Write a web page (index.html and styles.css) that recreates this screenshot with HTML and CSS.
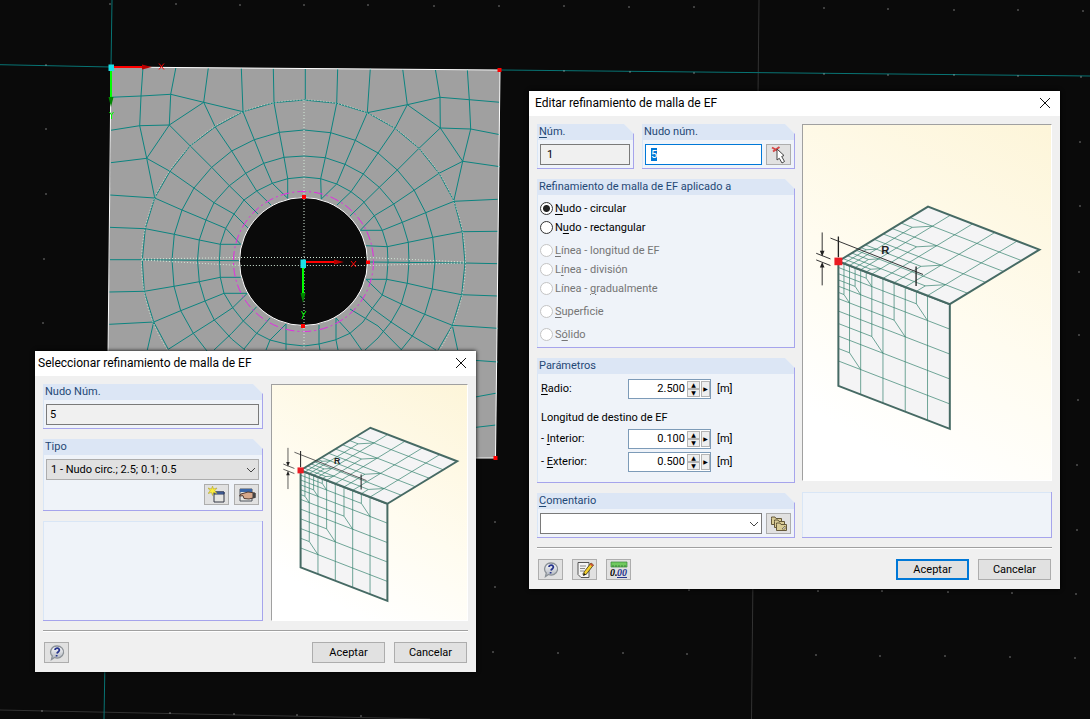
FILE: index.html
```
<!DOCTYPE html>
<html lang="es">
<head>
<meta charset="utf-8">
<meta name="viewport" content="width=device-width, initial-scale=1">
<title>Refinamiento de malla de EF</title>
<link rel="stylesheet" href="styles.css">
</head>
<body>
<main class="workspace">
<svg class="model" viewBox="0 0 1090 719" preserveAspectRatio="xMinYMin slice" aria-hidden="true">
  <g class="guides">
    <path class="guide-dark" d="M759 0L751.500 719M0 710L430 719"/>
    <path class="guide-teal" d="M0 64.700L111 67M500 70L1090 76M112 0L111 67M105 660L104 719"/>
  </g>
  <path class="dots" d="M110 4h0M176 4h0M240 5h0M304 5h0M368 5h0M434 6h0M499 6h0M564 6h0M629 7h0M694 7h0M824 8h0M888 9h0M954 10h0M1018 10h0M1083 11h0M46 65h0M46 129h0M46 194h0M44 259h0M43 323h0M564 71h0M630 72h0M694 73h0M824 74h0M888 75h0M954 75h0M1018 76h0M1081 77h0M1080 142h0M1080 206h0M1079 272h0M1079 335h0M1078 400h0M1077 465h0M1077 530h0M1076 594h0M1075 658h0M495 522h0M495 587h0M493 652h0M558 653h0M623 653h0M687 654h0M816 655h0M880 656h0M945 656h0M1010 657h0M689 590h0M818 591h0M882 591h0M948 592h0M1012 593h0M42 711h0M170 713h0M234 714h0M297 715h0M361 716h0"/>
  <path class="plate" d="M111.500 67L500 70L495.500 458L107 455Z"/>
  <g class="mesh">
    <path d="M143 67L141 96L139.700 125.700L146.700 158.300L154.700 197.700M176 67L170.700 94.300L169.300 125L190.300 146L211.700 167.300L229.300 185.700L244 200L258 214M208.300 68L203.700 102.300L215.300 127L231.700 151L245.700 173.300L256.700 191L271 205M241.300 68L243 111.700L254.300 139.700L263.700 163.300L272.300 183.300L287.700 198.300M273.300 68L274 102.700L279.300 132.300L284 157.300L287.700 178.700V198.300M305.300 68V100"/>
    <path d="M110 97.300L141 96L170.700 94.300L203.700 102.300L243 111.700M110.700 130.300L139.700 125.700L169.300 125L203.700 102.300M110.700 162.700L146.700 158.300L169.300 125M110 195L154.700 198L182 210L206 220L225.700 228.300L240.700 244.300M146.700 158.300L170 171.300L194 188L214 202.700L234 214L248.300 228.300"/>
    <path d="M337.700 68.300L336.700 103.300L330.700 132.700L325.300 157.700L320.700 178.700L321.300 199M370.300 68.700L367.300 112.700L355.300 140.300L345 164.300L336.700 184L321.300 199M402.700 69L407.300 104.700L395 128.300L378 153L363.300 174L351 191.700L337 205M435.300 69L440 97.300L440.300 128L419 148.300L397.300 170L379.300 187.300L350 216M467.300 69.300L469.300 99.700L470.700 129L462.700 161.300L454 200M367.300 112.700L407.300 104.700L440 97.300L469.300 99.700L500 102.300M407.300 104.700L440.300 128L470.700 129L500 134.700M440.300 128L462.700 161.300L500 166.700M462.700 161.300L439 173.300L414 190.300L393.700 204L374.300 215.700L360.300 230.300"/>
    <path d="M497.700 199.300L454 201.300L425.700 212.700L402.300 222.300L382.300 230.300H360.300M497.700 231.300L462.300 231.700L432.700 237.300L408.300 242.300L387.300 246.700L366 245.700M497.700 263.700L465 263L367.700 262M497.700 296L461.700 294.700L432.300 289L407.300 283.300L386.700 279.300H366M497.700 328.300L452.300 325.300L424.700 314.300L401.300 304L382.300 295L366 279.300M436 350L412.300 336L391 322L372.300 308.300L360 295.700M401.700 350L378 326L350 309M361.700 350L350 333.300L336 318V340L338 350M319 325V344L320 350M452.300 325.300L457.700 350"/>
    <path d="M109.300 227.300L145.300 228.700L174.300 234.300L199.300 240L220.300 244.300H240.700M110 259.700H142L239 260.700M109.300 292L144.300 291.300L174 286.300L199.300 281.700L220.300 277.300H240.700M109.300 324.300L153.700 322L180.700 310.700L205 301L224 293.300H247.300M153.700 322L147.300 350M168.300 349.300L193.300 333.300L214.300 320L232.700 307.700L247.300 293.300M214 350L231.700 333.300L243.300 321L256.700 306.700M244 349L256.700 333.300L270 318M266 350L270 340L286 324V350M470 360L498 362M470 398L497 393M470 428L496 425"/>
    <path d="M304 100L274 102.700L243 111.700L215 127L190 146L170 171.300L154.700 198L145.300 228.700L142.300 260L144.300 291.300L153.700 322L168.300 349.300M304 100L336.700 103.300L367.300 112.700L395 128.300L419 148.300L439 173.300L454 201L462.300 231.700L465 263L461.700 294.700L452.300 325.300L438 350"/>
    <path d="M304 130L279.300 132.300L254.300 139.700L231.700 151L211.700 167.300L194 188L182 210L174.300 234.300L172 260L174 286.300L180.700 310.700L193.300 333.300L207 351M304 130L330.700 132.700L355.300 140.300L378 153L397.300 170L414 190L425.700 212.700L432.700 237.300L435 262L432.300 289L424.700 314.300L412.300 336L401 350"/>
    <path d="M304 156L284 157.300L263.700 163.300L245.700 173.300L229.300 185.700L214 202.700L206 220L199.300 240L197.500 260L199.300 281.700L205 301L214.300 320L231.700 339L245 350M304 156L325.300 157.700L345 164.300L363.300 174L379.300 187.300L393.700 204L402.300 222.300L408.300 242.300L409 262L407.300 283.300L401.300 304L391 322L378 338L365 350"/>
    <path d="M304 177L287.700 178.700L272.300 183.300L256.700 191L244 200L234 214L225.700 228.300L220.300 244.300L219.500 260L220.300 277.300L224 293.300L232.700 307.700L243.300 321L256.700 333.300L270 340L286 344L304 346L319 344L335 340L350 333.300L363 322L372.300 308.300L382.300 295L386.700 279.300L388 262L387.300 246.700L382.300 230.300L374.300 215.700L363 201L351 191.700L336.700 184L320.700 178.700Z"/>
  </g>
  <circle class="hole" cx="303.500" cy="261.500" r="64"/>
  <circle class="zone" cx="303.500" cy="261.500" r="70"/>
  <circle class="dotted" cx="303.500" cy="262" r="162"/>
  <path class="dotted" d="M304 100V350M142 259L240 257.500H368L465 262M142 260L240 265.500H368L465 263"/>
  <path class="edge" d="M107 455L111 67L500 70L495.500 458H476"/>
  <g class="axis-x"><path d="M112 67H142M304 262H334"/><path class="tip" d="M142 64.500L152 67L142 69.500ZM334 259.500L344 262L334 264.500Z"/><path class="letter" d="M159 63.500L164 69.500M164 63.500L159 69.500M351 261L356 267M356 261L351 267"/></g>
  <g class="axis-y"><path d="M111 68V97M303 263V293"/><path class="tip" d="M108.500 97H113.500L111 107ZM300.500 293H305.500L303 303Z"/><path class="letter" d="M109.500 112L111.500 115L113.500 112M111.500 115V119M301.500 311L303.500 315L306 311M303.500 315L302 319"/></g>
  <path class="origin" d="M108.500 64.500H114V71H108.500ZM300.500 259.500H306V268H300.500Z"/>
  <path class="nodes" d="M497.500 68H501.500V72H497.500ZM493.500 456H497.500V460H493.500ZM302 195H306V199H302ZM301 324H305V328H301ZM366 260.500H370V264H366Z"/>
</svg>

<svg class="defs" aria-hidden="true">
  <defs>
    <linearGradient id="steel" x1="0" y1="0" x2="0" y2="1"><stop offset="0" stop-color="#fff"/><stop offset="1" stop-color="#aab0ba"/></linearGradient>
    <symbol id="i-help" viewBox="0 0 18 18">
      <path d="M9 2A6.500 6 0 1 1 6.500 13.500L3.500 15.500L4.300 12A6.500 6 0 0 1 9 2Z" fill="url(#steel)" stroke="#8c9298" stroke-width="1.300"/>
      <path d="M7 6C7.300 3.500 11.800 3.500 11.300 6.400C11 8 9.300 8 9 9.500M8.700 11L8.500 12.500" fill="none" stroke="#26348c" stroke-width="1.800"/>
    </symbol>
    <g id="mesh-face">
      <path class="face" d="M0 0H100V100H0Z"/>
      <path class="fine" d="M0 20H100M0 40H100M0 60H100M0 80H100M20 0V100M40 0V100M60 0V100M80 0V100M10 0V70L20 80M30 0V50L40 60M50 0V30L60 40M70 0V10L80 20M0 70H10M0 50H30M0 30H50M0 10H70M5 0V25L10 30M15 0V15L20 20M25 0V5L30 10M0 25H5M0 15H15M0 5H25"/>
      <path class="rim" d="M0 0H100V100H0Z"/>
    </g>
    <g id="folded-mesh">
      <use href="#mesh-face" transform="matrix(3.37 1.3 0 3.77 114 217)"/>
      <use href="#mesh-face" transform="matrix(3.37 1.3 2.71 -1.65 114 217)"/>
      <path d="M90 147L370 257M47 193L90 210M47 213L90 230M65 130V190M65 290V230" fill="none" stroke="#333" stroke-width="3"/>
      <path d="M114 142V205M349 233V292" stroke="#222" stroke-width="4"/>
      <path d="M58 185H72L65 203ZM58 236H72L65 219Z" fill="#222"/>
      <text x="244" y="194" class="radius">R</text>
      <path d="M102 206H126V229H102Z" fill="#ec1c24"/>
    </g>
  </defs>
</svg>

<section class="window select-window" aria-labelledby="t1">
  <header class="titlebar"><h2 id="t1">Seleccionar refinamiento de malla de EF</h2>
    <button class="close" type="button" aria-label="Cerrar"><svg viewBox="0 0 12 12"><path d="M1 1L11 11M11 1L1 11"/></svg></button></header>
  <form class="content">
    <div class="columns">
      <div class="stack">
        <div class="group"><label class="caption" for="nodo">Nudo Núm.</label>
          <div class="fields"><input id="nodo" class="box" value="5" readonly></div></div>
        <div class="group"><label class="caption" for="tipo">Tipo</label>
          <div class="fields"><span class="combo"><select id="tipo" class="grey"><option>1 - Nudo circ.; 2.5; 0.1; 0.5</option></select><svg viewBox="0 0 10 6"><path d="M1 1L5 5L9 1"/></svg></span></div>
          <div class="tools">
            <button class="icon" type="button" aria-label="Nuevo"><svg viewBox="0 0 18 18"><path d="M6 6H16V16H6Z" fill="#e5e5e2" stroke="#343946"/><path d="M6 6H16V8H6Z" fill="#557fc5" stroke="#26355c"/><path d="M4.500 0L5.500 3L9 2L6.800 4.700L9 7.500L5.600 6.500L4.500 9.500L3.500 6.500L0 7.500L2.200 4.700L0 2L3.500 3Z" fill="#fbec3a" stroke="#b2a434" stroke-width=".6"/></svg></button>
            <button class="icon" type="button" aria-label="Editar"><svg viewBox="0 0 18 18"><path d="M2 3H14V15H2Z" fill="#e5e5e2" stroke="#4d535d"/><path d="M2 3H14V6H2Z" fill="#3a66a8"/><path d="M17 7L10 6L3 8L1.500 10L5 9.700L6 12.500L11 13L17 11.500Z" fill="#d8a98c" stroke="#503a32"/><path d="M14.500 7L17.500 7V12L14.500 12Z" fill="#454545"/></svg></button>
          </div></div>
        <div class="group blank"></div>
      </div>
      <div class="preview"><svg viewBox="3 -114 757 911" role="img" aria-label="Malla con radio R"><use href="#folded-mesh"/></svg></div>
    </div>
    <footer class="actions"><button class="icon" type="button" aria-label="Ayuda"><svg viewBox="0 0 18 18"><use href="#i-help"/></svg></button><span class="spacer"></span><button class="push" type="button">Aceptar</button><button class="push" type="button">Cancelar</button></footer>
  </form>
</section>

<section class="window edit-window" aria-labelledby="t2">
  <header class="titlebar"><h2 id="t2">Editar refinamiento de malla de EF</h2>
    <button class="close" type="button" aria-label="Cerrar"><svg viewBox="0 0 12 12"><path d="M1 1L11 11M11 1L1 11"/></svg></button></header>
  <form class="content">
    <div class="columns">
      <div class="stack">
        <div class="pair">
          <div class="group"><label class="caption" for="num"><u>N</u>úm.</label><div class="fields"><input id="num" class="box inset" value="1" readonly></div></div>
          <div class="group"><label class="caption" for="nudo">Nudo núm.</label><div class="fields"><input id="nudo" class="box active" value="5">
            <button class="icon" type="button" aria-label="Seleccionar nudo"><svg viewBox="0 0 18 18"><path d="M2 1.500L9 5.500M9.500 1L3 5.500" stroke="#d64848" stroke-width="2"/><path d="M7 3L14 9.500L11.700 10.500L14.500 15.500L12 17L9.300 12.300L7 14Z" fill="#fff" stroke="#444"/></svg></button></div></div>
        </div>
        <fieldset class="group"><legend class="caption">Refinamiento de malla de EF aplicado a</legend>
          <div class="choices">
            <div><label><input type="radio" name="a" checked><span><u>N</u>udo - circular</span></label><label><input type="radio" name="a"><span>N<u>u</u>do - rectangular</span></label></div>
            <div><label><input type="radio" name="a" disabled><span><u>L</u>ínea - longitud de EF</span></label><label><input type="radio" name="a" disabled><span>L<u>í</u>nea - división</span></label><label><input type="radio" name="a" disabled><span>Línea - <u>g</u>radualmente</span></label></div>
            <div><label><input type="radio" name="a" disabled><span><u>S</u>uperficie</span></label></div>
            <div><label><input type="radio" name="a" disabled><span>S<u>ó</u>lido</span></label></div>
          </div></fieldset>
        <fieldset class="group params"><legend class="caption">Parámetros</legend>
          <div class="table">
            <label for="r"><u>R</u>adio:</label><span class="spin"><input id="r" value="2.500"><span class="steps"><button type="button" aria-label="Más">▲</button><button type="button" aria-label="Menos">▼</button></span><button class="more" type="button" aria-label="Lista">▶</button></span><span>[m]</span>
            <span class="subhead">Longitud de destino de EF</span>
            <label for="i">- <u>I</u>nterior:</label><span class="spin"><input id="i" value="0.100"><span class="steps"><button type="button" aria-label="Más">▲</button><button type="button" aria-label="Menos">▼</button></span><button class="more" type="button" aria-label="Lista">▶</button></span><span>[m]</span>
            <label for="e">- <u>E</u>xterior:</label><span class="spin"><input id="e" value="0.500"><span class="steps"><button type="button" aria-label="Más">▲</button><button type="button" aria-label="Menos">▼</button></span><button class="more" type="button" aria-label="Lista">▶</button></span><span>[m]</span>
          </div></fieldset>
        <div class="group"><label class="caption" for="com"><u>C</u>omentario</label><div class="fields"><span class="combo"><select id="com"><option></option></select><svg viewBox="0 0 10 6"><path d="M1 1L5 5L9 1"/></svg></span>
          <button class="icon" type="button" aria-label="Comentarios"><svg viewBox="0 0 18 18"><g fill="#d9cc96" stroke="#65593a"><path d="M1.500 3.500V2H5L6 3.500H11.500V9.500H1.500Z"/><path d="M4.500 6.500V5H8L9 6.500H14.500V12.500H4.500Z"/><path d="M6.500 9.500V8H10L11 9.500H16.500V15.500H6.500Z"/></g><path d="M12 14L15 11V14Z" fill="#fff" stroke="#65593a" stroke-width=".7"/></svg></button></div></div>
      </div>
      <div class="stack side">
        <div class="preview"><svg viewBox="7 -195 750 1074" role="img" aria-label="Malla con radio R"><use href="#folded-mesh"/></svg></div>
        <div class="group note"></div>
      </div>
    </div>
    <footer class="actions">
      <button class="icon" type="button" aria-label="Ayuda"><svg viewBox="0 0 18 18"><use href="#i-help"/></svg></button>
      <button class="icon" type="button" aria-label="Nota"><svg viewBox="0 0 18 18"><path d="M2 1.500H13V16.500H5L2 13.500Z" fill="#f4f4f4" stroke="#555"/><path d="M4 5H10M4 7.500H9M4 10H8M6 13H11" stroke="#888"/><path d="M15 2L17.500 4L10.500 13L7.500 14.500L8 11Z" fill="#f3cf2c" stroke="#3b3517" stroke-width=".8"/><path d="M15 2L17.500 4L16.300 5.500L13.800 3.500Z" fill="#c9543d"/><path d="M7.500 14.500L8 12L9.500 13.500Z" fill="#111"/></svg></button>
      <button class="icon" type="button" aria-label="Unidades y decimales"><svg viewBox="0 0 18 18"><path d="M1 1H17V6H1Z" fill="#6fc95e" stroke="#38883b" stroke-width=".7"/><path d="M3 4V6M6 4V6M9 4V6M12 4V6M15 4V6" stroke="#27662b" stroke-width=".7"/><text x="0" y="15" class="units">0.</text><text x="7" y="15" class="units blue">00</text><path d="M7 16.500H17" stroke="#26348c"/></svg></button>
      <span class="spacer"></span><button class="push default" type="button">Aceptar</button><button class="push" type="button">Cancelar</button>
    </footer>
  </form>
</section>
</main>
<script src="focus.js"></script>
</body>
</html>
```
FILE: focus.js
```
const nodeField = document.getElementById("nudo");
nodeField.focus();
nodeField.select();
```
FILE: styles.css
```
* { box-sizing: border-box; }
body { margin: 0; background: #0a0a0a; font: 11px/14px Roboto, sans-serif; color: #000; }
input, select, button { font: inherit; color: inherit; margin: 0; }
u { text-underline-offset: 2px; }

.workspace { position: relative; min-height: 100vh; overflow: hidden; }
.model { display: block; width: 100%; height: 100vh; }
.defs { position: absolute; width: 0; height: 0; }

.guide-dark { stroke: #333; fill: none; }
.guide-teal { stroke: #087474; fill: none; }
.dots { stroke: #ddd; stroke-width: 1; stroke-linecap: square; }
.plate { fill: #a0a0a0; }
.mesh { fill: none; stroke: #0c8480; stroke-width: 1; }
.hole { fill: #0a0a0a; stroke: #fff; stroke-width: 1; }
.zone { fill: none; stroke: #e32be3; stroke-dasharray: 9 3 2 3; }
.dotted { fill: none; stroke: #d3ead8; stroke-dasharray: 1 2; }
.edge { fill: none; stroke: #fff; stroke-width: 1; }
.axis-x { fill: none; stroke: #f00; stroke-width: 2; }
.axis-x .tip { fill: #b00; stroke: none; }
.axis-y { fill: none; stroke: #0f0; stroke-width: 2; }
.axis-y .tip { fill: #080; stroke: none; }
.axis-x .letter, .axis-y .letter { stroke-width: 1; }
.origin { fill: #1ce0e8; }
.nodes { fill: #f00; }

.window { position: absolute; background: #f0f0f0; box-shadow: 0 0 4px #000; }
.select-window { left: 35px; top: 351px; width: 441px; }
.edit-window { left: 529px; top: 91px; width: 531px; }
.titlebar { display: flex; align-items: center; justify-content: space-between; height: 25px; padding: 0 9px 1px 6px; background: #fff; }
.select-window .titlebar { padding-left: 3px; }
.titlebar h2 { margin: 0; font: 12px/16px Roboto, sans-serif; color: #000; }
.close { display: flex; padding: 0; border: 0; background: none; }
.close svg { width: 12px; height: 12px; fill: none; stroke: #111; }
.content { padding: 8px 8px 9px; }

.columns { display: grid; grid-template-columns: 258px 1fr; gap: 7px; }
.select-window .columns { grid-template-columns: 220px 1fr; gap: 8px; }
.stack { display: flex; flex-direction: column; gap: 10px; }
.pair { display: grid; grid-template-columns: 97px 1fr; gap: 8px; }

.group { min-width: 0; margin: 0; padding: 0 0 3px; border: 1px solid #a6a4ec; border-width: 0 1px 1px 0; background: #eff3f9; box-shadow: inset 1px 0 #d9e6f6; clip-path: polygon(0 0, calc(100% - 10px) 0, 100% 10px, 100% 100%, 0 100%); }
.caption { display: block; float: left; width: 100%; height: 16px; padding: 1px 2px; background: #dce6f5; color: #1f4876; }
.fields { clear: both; display: flex; gap: 4px; padding: 4px 3px 0; }
.blank { flex: 1; min-height: 100px; padding: 0; clip-path: none; box-shadow: inset 1px 1px #d9e6f6; }
.note { height: 46px; padding: 0; clip-path: none; box-shadow: inset 1px 1px #d9e6f6; }
.tools { display: flex; justify-content: flex-end; gap: 5px; padding: 4px 3px 2px; }

.box { flex: 1; min-width: 0; width: 0; height: 21px; padding: 0 3px; border: 1px solid #7a7a7a; background: #f0f0f0; outline: 0; }
.box.inset { padding-left: 6px; }
.box.active { padding-left: 5px; border: 1px solid #0078d7; background: #fff; }
.box::selection { background: #0078d7; color: #fff; }
.combo { position: relative; flex: 1; display: flex; }
.combo select { appearance: none; flex: 1; height: 21px; padding: 0 4px; border: 1px solid #7a7a7a; border-radius: 0; background: #fff; }
.combo .grey { background: #e1e1e1; border-color: #adadad; }
.combo svg { position: absolute; right: 3px; top: 8px; width: 10px; height: 6px; fill: none; stroke: #444; pointer-events: none; }

.icon { display: flex; align-items: center; justify-content: center; width: 25px; height: 21px; padding: 0; border: 1px solid #adadad; background: #e1e1e1; }
.icon svg { width: 18px; height: 18px; }
.units { font: italic bold 10px "Liberation Serif", serif; }
.blue { fill: #26348c; }

.choices { clear: both; display: grid; gap: 4px; padding: 4px 3px 0; }
.choices label { display: flex; align-items: center; gap: 2px; height: 19px; }
.choices input { appearance: none; width: 13px; height: 13px; border: 1px solid #333; border-radius: 50%; background: #fff; }
.choices input:checked { background: radial-gradient(circle, #222 3px, #fff 4px); }
.choices input:disabled { border-color: #c4c4c4; }
.choices input:disabled + span { color: #757575; }

.params { padding-bottom: 10px; }
.table { clear: both; display: grid; grid-template-columns: 81px 83px 1fr; gap: 3px 6px; align-items: center; padding: 5px 4px 0; }
.subhead { grid-column: 1 / -1; align-self: end; padding-top: 8px; line-height: 16px; }
.spin { display: flex; height: 20px; padding: 1px 0 1px 1px; border: 1px solid #7d9bb8; background: #fff; }
.spin input { flex: 1; width: 0; min-width: 0; padding: 0 2px 0 0; border: 0; background: none; text-align: right; }
.steps { display: grid; grid-template-rows: 1fr 1fr; width: 13px; }
.steps button, .more { padding: 0; border: 1px solid #b4b4b4; background: #eee; font: 6px/6px "DejaVu Sans", sans-serif; color: #000; }
.more { width: 9px; margin-left: 1px; }

.preview { border: 1px solid #fff; border-top-color: #a0a0a0; border-left-color: #a0a0a0; background: linear-gradient(30deg, #fff 15%, #fffcf0 50%, #fdf5d9); }
.preview svg { display: block; width: 100%; }
.side { justify-content: space-between; }
.face { fill: #f4f4f5; }
.fine, .rim { fill: none; stroke: #35836f; vector-effect: non-scaling-stroke; }
.fine { stroke-width: .7; }
.rim { stroke: #466a64; stroke-width: 2; }
.radius { font: bold 34px "Liberation Sans", sans-serif; fill: #222; }

.actions { display: flex; gap: 9px; margin-top: 9px; padding: 11px 1px 0; border-top: 1px solid #a0a0a0; box-shadow: inset 0 1px #fff; }
.spacer { flex: 1; }
.push { width: 73px; height: 21px; padding: 0; border: 1px solid #adadad; background: #e1e1e1; }
.default { border: 2px solid #0078d7; }
```
